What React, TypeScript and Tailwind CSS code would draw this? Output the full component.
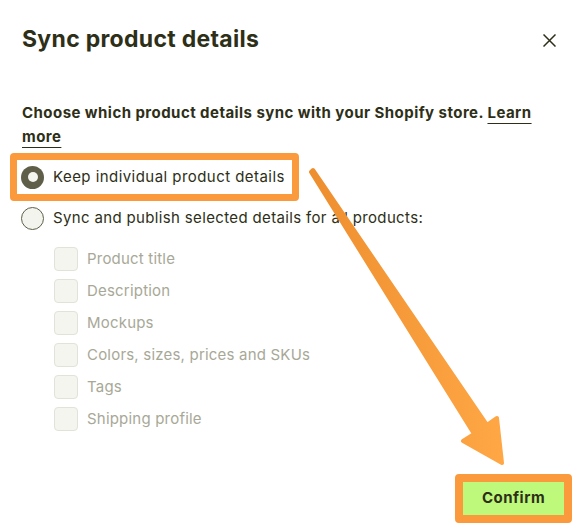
const details = [
    "Product title",
    "Description",
    "Mockups",
    "Colors, sizes, prices and SKUs",
    "Tags",
    "Shipping profile",
]

function Arrow() {
    return (
        <svg
            className="pointer-events-none absolute left-0 top-0"
            width="587"
            height="531"
            viewBox="0 0 587 531"
        >
            <defs>
                <linearGradient id="arrowFill" x1="0" y1="0" x2="1" y2="0">
                    <stop offset="0" stopColor="#ee8f2f" />
                    <stop offset="1" stopColor="#ffa745" />
                </linearGradient>
            </defs>
            <path
                d="M311 172 L313 170 L487 425 L497 418 L502 463 L463 441 L474 434 Z"
                fill="url(#arrowFill)"
                stroke="url(#arrowFill)"
                strokeWidth="4"
                strokeLinejoin="round"
            />
        </svg>
    )
}

export default function App() {
    return (
        <div className="relative h-[531px] w-[587px] overflow-hidden bg-white font-['Inter',sans-serif] text-[#2e2f18]">
            <div className="flex items-center justify-between pl-[22px] pr-[31px] pt-[24px]">
                <h2 className="text-[23px] font-bold leading-[30px] tracking-[0.3px]">Sync product details</h2>
                <svg width="13" height="13" viewBox="0 0 13 13" className="mt-[2px]">
                    <path d="M0.5 0.5 L12.5 12.5 M12.5 0.5 L0.5 12.5" stroke="#2e2f18" strokeWidth="1.5" />
                </svg>
            </div>

            <p className="mt-[47px] px-[22px] text-[15px] font-bold leading-[24px] tracking-[0.45px]">
                Choose which product details sync with your Shopify store. <a className="underline decoration-1 underline-offset-[5px]">Learn more</a>
            </p>

            <div className="mt-[4px] flex flex-col tracking-[0.45px]">
                <div className="ml-[10px] w-[289px] rounded-[4px] border-[7px] border-[#fb9a3c]">
                    <label className="flex h-[34px] items-center gap-[9px] pl-[4px]">
                        <span className="flex h-[23px] w-[23px] items-center justify-center rounded-full bg-[#5f5f49]">
                            <span className="h-[10px] w-[10px] rounded-full bg-[#f4f4ee]" />
                        </span>
                        <span className="text-[15px] text-[#2e2f18]">Keep individual product details</span>
                    </label>
                </div>

                <label className="mt-[4px] flex h-[26px] items-center gap-[9px] pl-[21px]">
                    <span className="h-[23px] w-[23px] rounded-full border border-[#5f5f49] bg-[#f4f4ee]" />
                    <span className="text-[15px] tracking-[0.35px] text-[#2e2f18]">Sync and publish selected details for all products:</span>
                </label>

                <div className="mt-[16px] flex flex-col gap-[8px] pl-[54px]">
                    {details.map((item) => (
                        <label key={item} className="flex h-[24px] items-center gap-[9px]">
                            <span className="h-[24px] w-[24px] rounded-[4px] border border-[#e2e2d8] bg-[#f5f5f0]" />
                            <span className="text-[15px] tracking-[0.2px] text-[#a8a897]">{item}</span>
                        </label>
                    ))}
                </div>
            </div>

            <div className="absolute bottom-[8px] right-[15px] rounded-[4px] border-[8px] border-[#fb9a3c]">
                <button className="flex h-[33px] w-[101px] items-center justify-center bg-[#bef97b] text-[15px] font-bold tracking-[0.5px] text-[#2e2f18]">
                    Confirm
                </button>
            </div>

            <Arrow />
        </div>
    )
}
